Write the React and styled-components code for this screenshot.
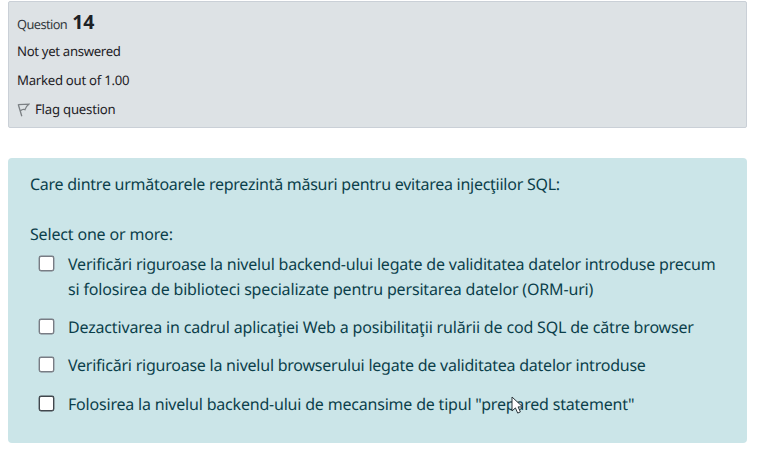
import React from "react";
import styled, { createGlobalStyle } from "styled-components";

const GlobalStyle = createGlobalStyle`
  * { box-sizing: border-box; }
  body {
    margin: 0;
    background: #fff;
    font-family: "Noto Sans", "Open Sans", sans-serif;
    text-rendering: geometricPrecision;
  }
`;

const Page = styled.main`
  width: 757px;
  height: 452px;
  padding: 1px 10px 0 8px;
  overflow: hidden;
`;

const InfoPanel = styled.section`
  height: 127px;
  padding: 6px 8px;
  border: 1px solid #cad0d7;
  border-radius: 2px;
  background: #dde2e5;
  color: #1d2125;
  font-size: 13.2px;
`;

const QuestionHeading = styled.h3`
  display: flex;
  align-items: baseline;
  gap: 5px;
  height: 29px;
  margin: 0;
  font-size: 12.8px;
  line-height: 28px;
  font-weight: 400;
  color: #343a40;
`;

const QuestionNumber = styled.span`
  font-size: 19.5px;
  font-weight: 700;
  color: #1d2125;
`;

const InfoLine = styled.div`
  display: flex;
  align-items: center;
  gap: 5px;
  height: 29px;
  line-height: 29px;
`;

const Flag = styled.svg`
  display: block;
  width: 13px;
  height: 14px;
`;

const Text = styled.span`
  white-space: nowrap;
  letter-spacing: ${(p) => p.$track || 0}px;
`;

const Formulation = styled.section`
  height: 285px;
  margin-top: 30px;
  padding: 14px 22px;
  border-radius: 4px;
  background: #cbe5e8;
  color: #0b3f4b;
  font-size: 16px;
  line-height: 25px;
`;

const Prompt = styled.p`
  height: 25px;
  margin: 0 0 25px;
`;

const Legend = styled.div`
  height: 25px;
  margin-bottom: 5px;
`;

const AnswerList = styled.div`
  display: flex;
  flex-direction: column;
  gap: 13.7px;
`;

const Answer = styled.label`
  display: flex;
  align-items: flex-start;
  gap: 14px;
  padding-left: 9px;
`;

const Checkbox = styled.input`
  appearance: none;
  flex: none;
  width: 15px;
  height: 15px;
  margin: 4px 0 0;
  border: 1px solid ${(p) => (p.$hovered ? "#41474d" : "#787c84")};
  border-radius: 2px;
  background: #fff;
  box-shadow: 0 0 0 0.4px ${(p) => (p.$hovered ? "#41474d" : "#787c84")};
`;

const AnswerText = styled.span`
  display: flex;
  flex-direction: column;
  line-height: 24.7px;
`;

const Cursor = styled.svg`
  position: absolute;
  left: 511px;
  top: 396px;
  width: 13px;
  height: 19px;
`;

const answers = [
  {
    lines: [
      ["Verificări riguroase la nivelul backend-ului legate de validitatea datelor introduse precum", -0.21],
      ["si folosirea de biblioteci specializate pentru persitarea datelor (ORM-uri)", -0.17],
    ],
  },
  { lines: [["Dezactivarea in cadrul aplicaţiei Web a posibilitaţii rulării de cod SQL de către browser", -0.17]] },
  { lines: [["Verificări riguroase la nivelul browserului legate de validitatea datelor introduse", -0.235]] },
  { lines: [['Folosirea la nivelul backend-ului de mecansime de tipul "prepared statement"', -0.197]], hovered: true },
];

export default function App() {
  return (
    <Page>
      <GlobalStyle />
      <InfoPanel>
        <QuestionHeading>
          <Text $track={-0.58}>Question</Text>
          <QuestionNumber>14</QuestionNumber>
        </QuestionHeading>
        <InfoLine><Text $track={-0.34}>Not yet answered</Text></InfoLine>
        <InfoLine><Text $track={-0.28}>Marked out of 1.00</Text></InfoLine>
        <InfoLine>
          <Flag viewBox="0 0 13 14" fill="none" stroke="#7b8084" strokeWidth="1.3">
            <path d="M1.2 1.3 4.8 13.2M1.2 1.6 11.8 1.2C10 2.6 8.6 4.2 8 6.6 6.2 5.9 4.8 6.4 3.3 8" />
          </Flag>
          <Text $track={-0.23}>Flag question</Text>
        </InfoLine>
      </InfoPanel>
      <Formulation>
        <Prompt><Text $track={-0.26}>Care dintre următoarele reprezintă măsuri pentru evitarea injecţiilor SQL:</Text></Prompt>
        <Legend><Text $track={-0.17}>Select one or more:</Text></Legend>
        <AnswerList>
          {answers.map(({ lines, hovered }) => (
            <Answer key={lines[0][0]}>
              <Checkbox type="checkbox" $hovered={hovered} />
              <AnswerText>
                {lines.map(([text, track]) => (
                  <Text key={text} $track={track}>{text}</Text>
                ))}
              </AnswerText>
            </Answer>
          ))}
        </AnswerList>
      </Formulation>
      <Cursor viewBox="0 0 13 19">
        <path d="M1 1v14l3.4-3.1 2.3 5.2 2.7-1.2-2.3-5h4.6z" fill="#fff" stroke="#29343a" strokeWidth="1" />
      </Cursor>
    </Page>
  );
}
